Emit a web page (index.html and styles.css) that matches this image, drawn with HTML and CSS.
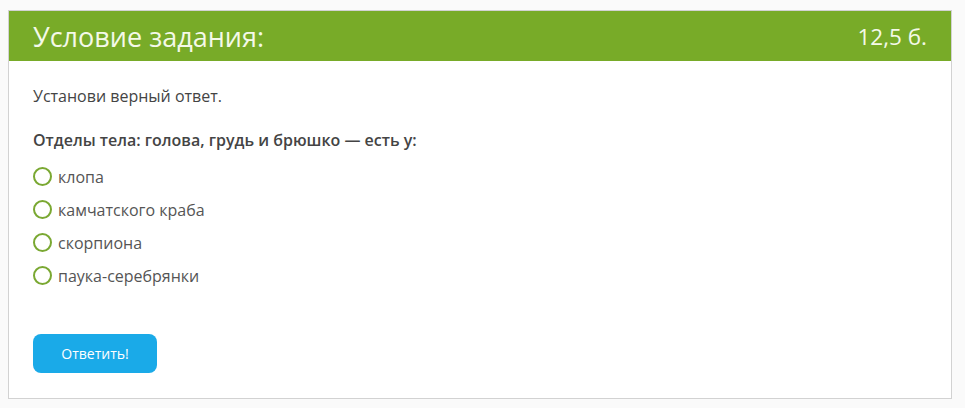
FILE: index.html
```html
<!DOCTYPE html>
<html lang="ru">
<head>
<meta charset="utf-8">
<link rel="stylesheet" href="styles.css">
</head>
<body>
<div class="card">
  <div class="card-head">
    <span class="title">Условие задания:</span>
    <span class="score">12,5 б.</span>
  </div>
  <div class="card-body">
    <p class="instr">Установи верный ответ.</p>
    <p class="question">Отделы тела: голова, грудь и брюшко — есть у:</p>
    <ul class="options">
      <li><span class="radio"></span>клопа</li>
      <li><span class="radio"></span>камчатского краба</li>
      <li><span class="radio"></span>скорпиона</li>
      <li><span class="radio"></span>паука-серебрянки</li>
    </ul>
    <button class="btn">Ответить!</button>
  </div>
</div>
</body>
</html>
```
FILE: styles.css
```css
html, body { margin: 0; padding: 0; }
body {
  background: #fafafa;
  font-family: "Open Sans", "Noto Sans", sans-serif;
  color: #444;
  padding: 10px 13px 0 8px;
}
.card {
  border: 1px solid #d2d2d2;
  background: #fff;
  box-sizing: border-box;
  height: 389px;
}
.card-head {
  background: #78ab28;
  height: 50px;
  display: flex;
  align-items: center;
  justify-content: space-between;
  padding: 0 24px;
  color: #f4f9e8;
}
.title { font-size: 27px; }
.score { font-size: 22.5px; }
.card-body { padding: 24px 24px 0 24px; }
.instr { margin: 0; font-size: 16px; line-height: 22px; }
.question { margin: 22px 0 0 0; font-size: 16px; font-weight: 600; line-height: 22px; color: #444; }
.options { list-style: none; margin: 9px 0 0 0; padding: 0; }
.options li {
  display: flex;
  align-items: center;
  height: 33px;
  font-size: 16px;
  color: #555;
}
.radio {
  width: 15px; height: 15px;
  border: 2px solid #7aa832;
  border-radius: 50%;
  margin-right: 6px;
  flex: none;
}
.btn {
  margin-top: 42px;
  width: 124px; height: 39px;
  border: none;
  border-radius: 8px;
  background: #1aaae8;
  color: #fff;
  font-family: "Open Sans", "Noto Sans", sans-serif;
  font-size: 14px;
  padding: 0;
}
```
